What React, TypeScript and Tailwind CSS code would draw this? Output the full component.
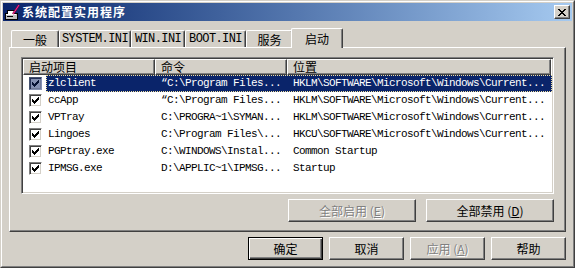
import React from 'react';

const cjk = { fontFamily: '"Noto Sans CJK SC", "Liberation Sans", sans-serif' };
const mono = { fontFamily: '"Liberation Mono", "Noto Sans CJK SC", monospace' };

interface Row {
  name: string;
  command: string;
  location: string;
}

const rows: Row[] = [
  { name: 'zlclient', command: '“C:\\Program Files...', location: 'HKLM\\SOFTWARE\\Microsoft\\Windows\\Current...' },
  { name: 'ccApp', command: '“C:\\Program Files...', location: 'HKLM\\SOFTWARE\\Microsoft\\Windows\\Current...' },
  { name: 'VPTray', command: 'C:\\PROGRA~1\\SYMAN...', location: 'HKLM\\SOFTWARE\\Microsoft\\Windows\\Current...' },
  { name: 'Lingoes', command: 'C:\\Program Files\\...', location: 'HKCU\\SOFTWARE\\Microsoft\\Windows\\Current...' },
  { name: 'PGPtray.exe', command: 'C:\\WINDOWS\\Instal...', location: 'Common Startup' },
  { name: 'IPMSG.exe', command: 'D:\\APPLIC~1\\IPMSG...', location: 'Startup' },
];

const AppIcon = () => (
  <svg width="16" height="16" viewBox="0 0 16 16" shapeRendering="crispEdges">
    <rect x="1" y="9" width="12" height="6" fill="#c0c0c0" stroke="#000" strokeWidth="1" />
    <rect x="3" y="6" width="7" height="4" fill="#ffffff" stroke="#000" strokeWidth="1" />
    <rect x="3" y="12" width="6" height="1" fill="#000" />
    <rect x="2" y="10" width="10" height="1" fill="#ffffff" />
    <path d="M15 1 L9 10" stroke="#800040" strokeWidth="2.2" shapeRendering="auto" />
    <path d="M15 1 L9 10" stroke="#ff3399" strokeWidth="1" shapeRendering="auto" />
  </svg>
);

const CloseButton = () => (
  <div className="w-[16px] h-[14px] bg-[#d4d0c8] border border-t-white border-l-white border-r-[#404040] border-b-[#404040] shadow-[inset_-1px_-1px_#808080] flex items-center justify-center">
    <svg width="8" height="7" viewBox="0 0 8 7" shapeRendering="crispEdges">
      <path d="M0 0h2v1h1v1h2V1h1V0h2v1H7v1H6v1H5v1h1v1h1v1h1v1H6V6H5V5H3v1H2v1H0V6h1V5h1V4h1V3H2V2H1V1H0z" fill="#000" />
    </svg>
  </div>
);

const Check = ({ color }: { color: string }) => (
  <svg width="7" height="7" viewBox="0 0 7 7" shapeRendering="crispEdges">
    <path d="M6 0h1v3H6v1H5v1H4v1H3v1H2V6H1V5H0V2h1v1h1v1h1V3h1V2h1V1h1z" fill={color} />
  </svg>
);

const Checkbox = ({ selected }: { selected: boolean }) =>
  selected ? (
    <div className="w-[13px] h-[13px] shrink-0 border border-t-[#45526f] border-l-[#45526f] border-r-[#8491b4] border-b-[#8491b4] shadow-[inset_1px_1px_#253258,inset_-1px_-1px_#6f7a99] bg-[#8491b4] flex items-center justify-center">
      <Check color="#051235" />
    </div>
  ) : (
    <div className="w-[13px] h-[13px] shrink-0 border border-t-[#808080] border-l-[#808080] border-r-white border-b-white shadow-[inset_1px_1px_#404040,inset_-1px_-1px_#d4d0c8] bg-white flex items-center justify-center">
      <Check color="#000" />
    </div>
  );

const Tab = ({ label, width, isMono }: { label: string; width: string; isMono?: boolean }) => (
  <div
    className={`${width} h-[17px] border-t border-l border-r border-t-white border-l-white border-r-[#404040] shadow-[inset_-1px_0_#808080] rounded-tl-[2px] rounded-tr-[2px] flex items-center justify-center text-[12px] leading-[15px] text-black whitespace-nowrap ${isMono ? 'tracking-[-0.6px]' : ''}`}
    style={isMono ? mono : cjk}
  >
    {label}
  </div>
);

const faceRaised =
  'bg-[#d4d0c8] border border-t-white border-l-white border-r-[#404040] border-b-[#404040] shadow-[inset_-1px_-1px_#808080]';

export default function App() {
  return (
    <div className="w-[575px] h-[268px] bg-[#d4d0c8] border border-t-[#d4d0c8] border-l-[#d4d0c8] border-r-[#404040] border-b-[#404040] overflow-hidden">
      <div className="h-full border border-t-white border-l-white border-r-[#808080] border-b-[#808080] p-px flex flex-col">
        {/* title bar */}
        <div className="h-[18px] shrink-0 flex items-center bg-linear-to-r from-[#0a246a] to-[#a6caf0] pl-px pr-[2px]">
          <AppIcon />
          <span className="ml-[2px] text-white font-bold text-[12px] leading-[16px] tracking-[1px]" style={cjk}>
            系统配置实用程序
          </span>
          <div className="flex-1" />
          <CloseButton />
        </div>

        {/* tabs */}
        <div className="mt-[7px] h-[19px] shrink-0 flex items-end pl-[8px]">
          <Tab label="一般" width="w-[48px]" />
          <Tab label="SYSTEM.INI" width="w-[72px]" isMono />
          <Tab label="WIN.INI" width="w-[54px]" isMono />
          <Tab label="BOOT.INI" width="w-[61px]" isMono />
          <Tab label="服务" width="w-[47px]" />
          <div
            className="relative z-10 -ml-[2px] -mb-px w-[52px] h-[20px] bg-[#d4d0c8] border-t border-l border-r border-t-white border-l-white border-r-[#404040] shadow-[inset_-1px_0_#808080] rounded-tl-[2px] rounded-tr-[2px] flex items-start justify-center pt-[2px] text-[12px] leading-[15px] text-black"
            style={cjk}
          >
            启动
          </div>
        </div>

        {/* tab panel */}
        <div className="mx-[6px] h-[185px] shrink-0 border border-t-white border-l-white border-r-[#404040] border-b-[#404040] shadow-[inset_-1px_-1px_#808080] pt-[9px] px-[11px] flex flex-col">
          <div className="h-[137px] bg-white border border-t-[#808080] border-l-[#808080] border-r-white border-b-white shadow-[inset_1px_1px_#404040,inset_-1px_-1px_#d4d0c8] p-px overflow-hidden">
            <div className="flex h-[16px] text-[12px] leading-[14px] text-black" style={cjk}>
              <div className={`w-[132px] ${faceRaised} pl-[5px]`}>启动项目</div>
              <div className={`w-[132px] ${faceRaised} pl-[5px]`}>命令</div>
              <div className={`w-[264px] ${faceRaised} pl-[5px]`}>位置</div>
            </div>
            {rows.map((r, i) => {
              const sel = i === 0;
              return (
                <div key={r.name} className="h-[17px] flex items-center text-[11px] leading-[15px] tracking-[-0.6px] whitespace-nowrap" style={mono}>
                  <div className="w-[6px] shrink-0" />
                  <Checkbox selected={sel} />
                  <div className="w-[4px] shrink-0" />
                  <div
                    className={`flex-1 h-[17px] flex items-center ${sel ? 'bg-[#0a246a] text-white border border-dotted border-[#f0e0a0]' : 'text-black border border-transparent'}`}
                  >
                    <div className="w-[108px] pl-px shrink-0 overflow-hidden">{r.name}</div>
                    <div className="w-[132px] pl-[6px] shrink-0 overflow-hidden">{r.command}</div>
                    <div className="flex-1 pl-[6px] overflow-hidden">{r.location}</div>
                  </div>
                </div>
              );
            })}
          </div>

          <div className="mt-[5px] flex justify-end gap-[10px]">
            <div
              className={`w-[128px] h-[23px] ${faceRaised} flex items-center justify-center text-[12px] text-[#808080] [text-shadow:1px_1px_0_#ffffff]`}
              style={cjk}
            >
              全部启用 (<span className="underline">E</span>)
            </div>
            <div className={`w-[128px] h-[23px] ${faceRaised} flex items-center justify-center text-[12px] text-black`} style={cjk}>
              全部禁用 (<span className="underline">D</span>)
            </div>
          </div>
        </div>

        {/* dialog buttons */}
        <div className="mt-[5px] flex justify-end gap-[6px] pr-[6px]">
          <div
            className="w-[75px] h-[23px] bg-[#d4d0c8] border border-black shadow-[inset_1px_1px_#ffffff,inset_-1px_-1px_#404040,inset_-2px_-2px_#808080] flex items-center justify-center text-[12px] text-black"
            style={cjk}
          >
            确定
          </div>
          <div className={`w-[75px] h-[23px] ${faceRaised} flex items-center justify-center text-[12px] text-black`} style={cjk}>
            取消
          </div>
          <div
            className={`w-[75px] h-[23px] ${faceRaised} flex items-center justify-center text-[12px] text-[#808080] [text-shadow:1px_1px_0_#ffffff]`}
            style={cjk}
          >
            应用 (<span className="underline">A</span>)
          </div>
          <div className={`w-[75px] h-[23px] ${faceRaised} flex items-center justify-center text-[12px] text-black`} style={cjk}>
            帮助
          </div>
        </div>
      </div>
    </div>
  );
}
